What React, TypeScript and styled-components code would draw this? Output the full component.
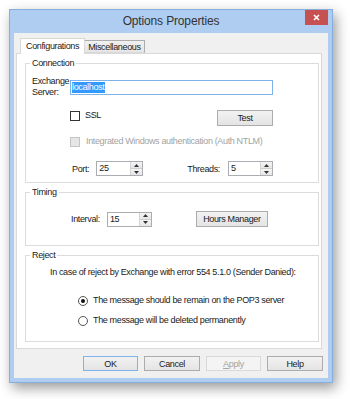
import React from "react";
import styled, { createGlobalStyle } from "styled-components";

const UI_FONT = `"Liberation Sans", Arial, sans-serif`;

const Global = createGlobalStyle`
  html, body { margin: 0; padding: 0; background: #ffffff; }
  body { font-family: ${UI_FONT}; font-size: 9px; letter-spacing: -0.35px; color: #1a1a1a; }
  * { box-sizing: border-box; }
`;

const Page = styled.div`
  width: 350px;
  height: 399px;
  padding: 9px 0 0 9px;
  overflow: hidden;
`;

const Window = styled.div`
  width: 324px;
  height: 374px;
  display: flex;
  flex-direction: column;
  background: #afcdf0;
  border: 1px solid #88aedc;
  padding: 0 4px 4px 4px;
  box-shadow: 3px 5px 12px rgba(0, 0, 0, 0.4);
`;

const TitleBar = styled.div`
  height: 23px;
  display: grid;
  grid-template-columns: 23px 1fr 23px;
  align-items: start;
`;

const Title = styled.div`
  grid-column: 2;
  text-align: center;
  font-size: 12px;
  letter-spacing: -0.15px;
  line-height: 23px;
  color: #333333;
`;

const CloseButton = styled.div`
  grid-column: 3;
  width: 23px;
  height: 15px;
  margin-right: -1px;
  background: #c75050;
  display: flex;
  align-items: center;
  justify-content: center;
`;

const Body = styled.div`
  flex: 1;
  background: #f0f0f0;
  padding: 5px 6px 0 2px;
  display: flex;
  flex-direction: column;
`;

const TabStrip = styled.div`
  display: flex;
  align-items: flex-end;
  height: 16px;
  padding-left: 4px;
  margin-bottom: -1px;
  position: relative;
  z-index: 1;
`;

const Tab = styled.div<{ $active?: boolean }>`
  height: ${(p) => (p.$active ? "16px" : "13px")};
  margin-bottom: ${(p) => (p.$active ? "0" : "1px")};
  padding: 0 ${(p) => (p.$active ? "5px" : "3px")};
  border: 1px solid ${(p) => (p.$active ? "#d9d9d9" : "#acacac")};
  border-bottom: ${(p) => (p.$active ? "none" : "1px solid #d9d9d9")};
  border-left: ${(p) => (p.$active ? "1px solid #d9d9d9" : "none")};
  background: ${(p) => (p.$active ? "#ffffff" : "linear-gradient(#f0f0f0, #e5e5e5)")};
  line-height: ${(p) => (p.$active ? "14px" : "12px")};
  color: #1a1a1a;
  white-space: nowrap;
`;

const Panel = styled.div`
  height: 296px;
  background: #ffffff;
  border: 1px solid #d9d9d9;
  padding: 3px 2px 3px 8px;
  display: flex;
  flex-direction: column;
  gap: 3px;
`;

const Group = styled.fieldset`
  margin: 0;
  padding: 0;
  min-width: 0;
  border: 1px solid #dcdcdc;
`;

const Legend = styled.legend`
  margin-left: 4px;
  padding: 0 2px;
  line-height: 12px;
  color: #1a1a1a;
`;

const GroupContent = styled.div<{ $pt: number; $pb: number }>`
  padding: ${(p) => p.$pt}px 0 ${(p) => p.$pb}px 6px;
`;

const Row = styled.div<{ $mt?: number; $ml?: number; $spread?: boolean; $top?: boolean }>`
  display: flex;
  align-items: ${(p) => (p.$top ? "flex-start" : "center")};
  margin-top: ${(p) => p.$mt ?? 0}px;
  margin-left: ${(p) => p.$ml ?? 0}px;
  width: ${(p) => (p.$spread ? "203px" : "auto")};
  justify-content: ${(p) => (p.$spread ? "space-between" : "flex-start")};
`;

const FieldLabel = styled.div`
  width: 38px;
  line-height: 11px;
  color: #1a1a1a;
`;

const TextBox = styled.div`
  width: 203px;
  height: 15px;
  border: 1px solid #7eb4ea;
  background: #fff;
  padding: 0 1px;
  display: flex;
  align-items: center;
`;

const Selected = styled.span`
  background: #3399ff;
  color: #fff;
  line-height: 11px;
  padding-right: 1px;
`;

const Inline = styled.div<{ $gap: number; $ml?: number }>`
  display: flex;
  align-items: center;
  gap: ${(p) => p.$gap}px;
  margin-left: ${(p) => p.$ml ?? 0}px;
`;

const CheckBox = styled.div<{ $disabled?: boolean }>`
  width: 10px;
  height: 10px;
  border: 1px solid ${(p) => (p.$disabled ? "#c4c4c4" : "#333333")};
  background: ${(p) => (p.$disabled ? "#e6e6e6" : "#ffffff")};
`;

const OptionLabel = styled.span<{ $disabled?: boolean }>`
  color: ${(p) => (p.$disabled ? "#a3a3a3" : "#1a1a1a")};
  line-height: 11px;
  white-space: nowrap;
`;

const Radio = styled.div<{ $checked?: boolean }>`
  width: 10px;
  height: 10px;
  border-radius: 50%;
  border: 1px solid #555555;
  background: #ffffff;
  display: flex;
  align-items: center;
  justify-content: center;
  &::after {
    content: "";
    width: 4px;
    height: 4px;
    border-radius: 50%;
    background: ${(p) => (p.$checked ? "#111111" : "transparent")};
  }
`;

const PushButton = styled.div<{ $w: number; $h?: number; $default?: boolean; $disabled?: boolean }>`
  width: ${(p) => p.$w}px;
  height: ${(p) => p.$h ?? 15}px;
  border: 1px solid
    ${(p) => (p.$default ? "#7eb4ea" : p.$disabled ? "#d9d9d9" : "#acacac")};
  background: ${(p) => (p.$disabled ? "#f4f4f4" : "linear-gradient(#f2f2f2, #e4e4e4)")};
  color: ${(p) => (p.$disabled ? "#a3a3a3" : "#1a1a1a")};
  display: flex;
  align-items: center;
  justify-content: center;
  white-space: nowrap;
`;

const Spinner = styled.div<{ $w: number }>`
  width: ${(p) => p.$w}px;
  height: 15px;
  border: 1px solid #abadb3;
  background: #ffffff;
  display: flex;
`;

const SpinValue = styled.div`
  flex: 1;
  padding-left: 2px;
  line-height: 13px;
`;

const SpinButtons = styled.div`
  width: 12px;
  display: flex;
  flex-direction: column;
  border-left: 1px solid #d4d4d4;
`;

const SpinHalf = styled.div<{ $down?: boolean }>`
  flex: 1;
  background: linear-gradient(#f4f4f4, #e6e6e6);
  border-top: ${(p) => (p.$down ? "1px solid #cfcfcf" : "none")};
  display: flex;
  align-items: center;
  justify-content: center;
`;

const ButtonRow = styled.div`
  display: flex;
  justify-content: flex-end;
  gap: 6px;
  margin-top: 7px;
  margin-right: -1px;
`;

const Paragraph = styled.div<{ $ml: number }>`
  margin-left: ${(p) => p.$ml}px;
  line-height: 11px;
  white-space: nowrap;
`;

const Arrow = ({ down }: { down?: boolean }) => (
  <svg width="5" height="3" viewBox="0 0 5 3">
    <path d={down ? "M0 0 H5 L2.5 3 Z" : "M0 3 H5 L2.5 0 Z"} fill="#333" />
  </svg>
);

const SpinBox = ({ value, width }: { value: string; width: number }) => (
  <Spinner $w={width}>
    <SpinValue>{value}</SpinValue>
    <SpinButtons>
      <SpinHalf>
        <Arrow />
      </SpinHalf>
      <SpinHalf $down>
        <Arrow down />
      </SpinHalf>
    </SpinButtons>
  </Spinner>
);

export default function App() {
  return (
    <>
      <Global />
      <Page>
        <Window>
          <TitleBar>
            <Title>Options Properties</Title>
            <CloseButton>
              <svg width="7" height="7" viewBox="0 0 7 7">
                <path d="M1 1 L6 6 M6 1 L1 6" stroke="#fff" strokeWidth="1.6" />
              </svg>
            </CloseButton>
          </TitleBar>
          <Body>
            <TabStrip>
              <Tab $active>Configurations</Tab>
              <Tab>Miscellaneous</Tab>
            </TabStrip>
            <Panel>
              <Group>
                <Legend>Connection</Legend>
                <GroupContent $pt={7} $pb={6}>
                  <Row>
                    <FieldLabel>
                      Exchange
                      <br />
                      Server:
                    </FieldLabel>
                    <TextBox>
                      <Selected>localhost</Selected>
                    </TextBox>
                  </Row>
                  <Row $mt={12} $ml={38} $spread $top>
                    <Inline $gap={5}>
                      <CheckBox />
                      <OptionLabel>SSL</OptionLabel>
                    </Inline>
                    <PushButton $w={56} $h={16}>
                      Test
                    </PushButton>
                  </Row>
                  <Row $mt={10} $ml={38}>
                    <Inline $gap={6}>
                      <CheckBox $disabled />
                      <OptionLabel $disabled>
                        Integrated Windows authentication (Auth NTLM)
                      </OptionLabel>
                    </Inline>
                  </Row>
                  <Row $mt={14} $ml={38} $spread>
                    <Inline $gap={7} $ml={2}>
                      <span>Port:</span>
                      <SpinBox value="25" width={47} />
                    </Inline>
                    <Inline $gap={8}>
                      <span>Threads:</span>
                      <SpinBox value="5" width={45} />
                    </Inline>
                  </Row>
                </GroupContent>
              </Group>
              <Group>
                <Legend>Timing</Legend>
                <GroupContent $pt={13} $pb={18}>
                  <Row $ml={39}>
                    <Inline $gap={7}>
                      <span>Interval:</span>
                      <SpinBox value="15" width={45} />
                    </Inline>
                    <Inline $gap={0} $ml={44}>
                      <PushButton $w={72} $h={16}>
                        Hours Manager
                      </PushButton>
                    </Inline>
                  </Row>
                </GroupContent>
              </Group>
              <Group>
                <Legend>Reject</Legend>
                <GroupContent $pt={6} $pb={15}>
                  <Paragraph $ml={18}>
                    In case of reject by Exchange with error 554 5.1.0 (Sender Danied):
                  </Paragraph>
                  <Row $mt={17} $ml={46}>
                    <Inline $gap={5}>
                      <Radio $checked />
                      <OptionLabel>The message should be remain on the POP3 server</OptionLabel>
                    </Inline>
                  </Row>
                  <Row $mt={9} $ml={46}>
                    <Inline $gap={5}>
                      <Radio />
                      <OptionLabel>The message will be deleted permanently</OptionLabel>
                    </Inline>
                  </Row>
                </GroupContent>
              </Group>
            </Panel>
            <ButtonRow>
              <PushButton $w={55} $default>
                OK
              </PushButton>
              <PushButton $w={56}>Cancel</PushButton>
              <PushButton $w={55} $disabled>
                <u>A</u>pply
              </PushButton>
              <PushButton $w={56}>Help</PushButton>
            </ButtonRow>
          </Body>
        </Window>
      </Page>
    </>
  );
}
